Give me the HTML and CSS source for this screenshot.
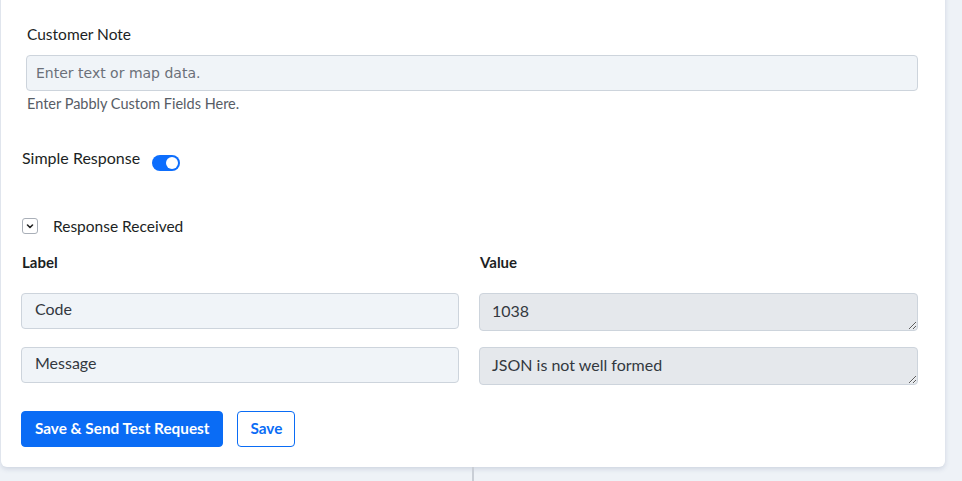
FILE: index.html
```html
<!DOCTYPE html>
<html lang="en">

<head>
  <meta charset="UTF-8">
  <title>Action Step</title>
  <link rel="stylesheet" href="styles.css">
</head>

<body>
  <div class="card">
    <div class="field">
      <label class="field-label">Customer Note</label>
      <input class="map-input" type="text" placeholder="Enter text or map data.">
      <div class="help">Enter Pabbly Custom Fields Here.</div>
    </div>

    <div class="switch-row">
      <span>Simple Response</span>
      <span class="switch"><span class="knob"></span></span>
    </div>

    <div class="collapse-row">
      <span class="chevron">
        <svg width="10" height="10" viewBox="0 0 10 10"><path d="M2.5 4 L5 6.5 L7.5 4" fill="none" stroke="#222" stroke-width="1.6" stroke-linecap="round" stroke-linejoin="round"/></svg>
      </span>
      <span>Response Received</span>
    </div>

    <div class="kv">
      <div class="kv-head">Label</div>
      <div class="kv-head">Value</div>
      <div class="kv-key">Code</div>
      <textarea class="kv-val" readonly>1038</textarea>
      <div class="kv-key">Message</div>
      <textarea class="kv-val" readonly>JSON is not well formed</textarea>
    </div>

    <div class="actions">
      <button class="btn btn-primary">Save &amp; Send Test Request</button>
      <button class="btn btn-outline">Save</button>
    </div>
  </div>
  <div class="below">
    <div class="below-left"></div>
    <div class="below-right"></div>
  </div>
</body>

</html>
```

FILE: styles.css
```css
html,
body {
  margin: 0;
  padding: 0;
  height: 100%;
  background: #eef2f7;
  font-family: Lato, "Noto Sans", sans-serif;
  color: #1c1f24;
  overflow: hidden;
}

.card {
  margin-left: 1px;
  width: 944px;
  box-sizing: border-box;
  margin-top: -10px;
  padding: 33px 27px 20px 20px;
  background: #fff;
  border-radius: 0 0 6px 6px;
  box-shadow: 0 2px 5px rgba(60, 80, 120, 0.18);
}

.field {
  padding-left: 5px;
}

.field-label {
  display: block;
  font-size: 15.5px;
  line-height: 22px;
  margin-left: 1px;
  margin-bottom: 10px;
}

.map-input {
  display: block;
  width: 100%;
  box-sizing: border-box;
  height: 36px;
  padding: 0 9px;
  background: #f0f4f8;
  border: 1px solid #cdd4dc;
  border-radius: 4px;
  font-family: "DejaVu Sans", sans-serif;
  font-size: 14px;
  outline: none;
}

.map-input::placeholder {
  color: #6b7079;
}

.help {
  margin: 4px 0 0 1px;
  font-size: 14.5px;
  line-height: 18px;
  color: #575d66;
}

.switch-row {
  display: flex;
  align-items: center;
  gap: 12px;
  margin-top: 33px;
  margin-left: 1px;
  font-size: 16px;
  height: 22px;
}

.switch {
  position: relative;
  width: 28px;
  height: 16px;
  border-radius: 8px;
  background: #0d6efd;
  margin-top: 11px;
}

.knob {
  position: absolute;
  right: 2px;
  top: 2px;
  width: 12px;
  height: 12px;
  border-radius: 50%;
  background: #fff;
}

.collapse-row {
  display: flex;
  align-items: center;
  gap: 15px;
  margin-top: 47px;
  margin-left: 1px;
  font-size: 15.5px;
  line-height: 22px;
}

.chevron {
  display: flex;
  align-items: center;
  justify-content: center;
  width: 14px;
  height: 14px;
  border: 1px solid #a9afb8;
  border-radius: 3px;
}

.kv {
  display: grid;
  grid-template-columns: 438px 439px;
  column-gap: 20px;
  row-gap: 16px;
  margin-top: 14px;
}

.kv-head {
  font-size: 15px;
  font-weight: 700;
  line-height: 22px;
  margin: 0 0 4px 1px;
}

.kv-key,
.kv-val {
  box-sizing: border-box;
  border: 1px solid #cdd4dc;
  border-radius: 4px;
  font-family: Lato, "Noto Sans", sans-serif;
  font-size: 16px;
  line-height: 20px;
  color: #33383f;
}

.kv-key {
  height: 36px;
  padding: 5px 13px;
  background: #f0f4f8;
}

.kv-val {
  height: 38px;
  padding: 7px 12px;
  background: #e5e8ec;
  resize: vertical;
  outline: none;
}

.actions {
  display: flex;
  gap: 14px;
  margin-top: 26px;
}

.btn {
  height: 36px;
  padding: 0 13px 2px;
  border-radius: 4px;
  font-family: Lato, "Noto Sans", sans-serif;
  font-size: 15.3px;
  font-weight: 700;
}

.btn-primary {
  background: #0a6cf5;
  border: 1px solid #0a6cf5;
  color: #fff;
}

.btn-outline {
  padding: 0 12px 2px;
  background: #fff;
  border: 1px solid #0a6cf5;
  color: #0a6cf5;
}

.below {
  display: flex;
  height: 14px;
}

.below-left {
  width: 472px;
  border-right: 2px solid #c9ced6;
}
```
